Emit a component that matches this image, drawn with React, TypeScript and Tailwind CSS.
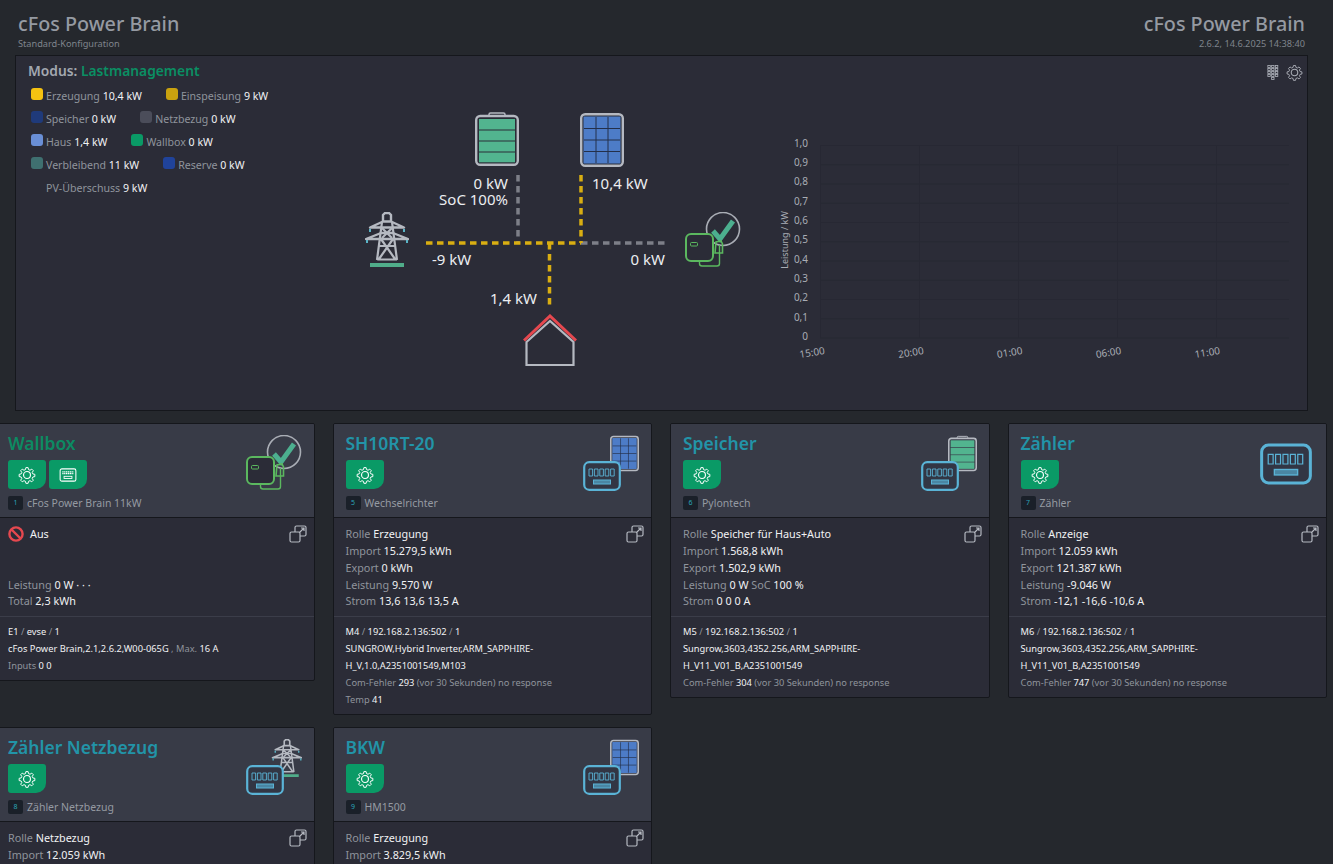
import React from 'react';

type SvgProps = React.SVGProps<SVGSVGElement>;

const BatteryIcon: React.FC<SvgProps> = (props) => (
  <svg viewBox="0 0 44 54" fill="none" {...props}>
    <path d="M14 4V2.5A1.5 1.5 0 0 1 15.5 1h13A1.5 1.5 0 0 1 30 2.5V4" stroke="#b5b9c1" strokeWidth="1.5" />
    <rect x="1.2" y="4" width="41.6" height="48.8" rx="4" stroke="#b5b9c1" strokeWidth="2.4" />
    <rect x="4" y="7" width="36" height="10.5" fill="#52b48f" />
    <rect x="4" y="18.5" width="36" height="10" fill="#52b48f" />
    <rect x="4" y="29.5" width="36" height="10" fill="#52b48f" />
    <rect x="4" y="40.5" width="36" height="9.8" fill="#52b48f" />
  </svg>
);

const SolarIcon: React.FC<SvgProps> = (props) => (
  <svg viewBox="0 0 44 54" fill="none" {...props}>
    <rect x="1.2" y="1.2" width="41.6" height="51.6" rx="4" stroke="#b5b9c1" strokeWidth="2.4" />
    <rect x="3.5" y="3.5" width="37" height="47" fill="#4d7cc7" />
    <path d="M16 4v46M28 4v46M4 15.5h36M4 27h36M4 38.5h36" stroke="#24304a" strokeWidth="1" />
  </svg>
);

const TowerIcon: React.FC<SvgProps> = (props) => (
  <svg viewBox="0 0 44 55" fill="none" {...props}>
    <path d="M18 9V3l2-2h4l2 2v6" stroke="#b5b9c1" strokeWidth="2.4" />
    <path d="M5 15.5l13-6h8l13 6zM1 27l15-6h12l15 6z" stroke="#b5b9c1" strokeWidth="2.4" strokeLinejoin="round" />
    <path d="M17 10l-5 38M27 10l5 38M14 34h16M12 47.5h20M17 16l10 10M27 16l-10 10M16 27l14 20M28 27L14 47" stroke="#b5b9c1" strokeWidth="2.2" />
    <path d="M5 17v3M39 17v3M2 28v3M42 28v3" stroke="#5ab4c6" strokeWidth="2" />
    <rect x="5" y="51" width="34" height="4" fill="#50ad8a" />
  </svg>
);

const HouseIcon: React.FC<SvgProps> = (props) => (
  <svg viewBox="0 0 54 52" fill="none" {...props}>
    <path d="M3.5 28L27 7l23.5 21v23h-47z" stroke="#b5b9c1" strokeWidth="2.2" />
    <path d="M1 26.5L27 2l26 24.5" stroke="#e5484f" strokeWidth="3" />
  </svg>
);

const WallboxIcon: React.FC<SvgProps> = (props) => (
  <svg viewBox="0 0 56 56" fill="none" {...props}>
    <circle cx="38" cy="17" r="16.5" stroke="#a9adb5" strokeWidth="1.6" />
    <path d="M28 19l7 8L48 9" stroke="#4caf8f" strokeWidth="5" />
    <rect x="1" y="22" width="27" height="27" rx="5" stroke="#5bb85f" strokeWidth="2" fill="#2b2c37" />
    <rect x="5.5" y="30.5" width="7" height="3.5" rx="1" stroke="#5bb85f" strokeWidth="1" />
    <path d="M14.5 49v2.5a2.5 2.5 0 0 0 2.5 2.5h15a2.5 2.5 0 0 0 2.5-2.5V33" stroke="#5bb85f" strokeWidth="1.4" />
    <path d="M30 41l1-11 5-1 1.5 3v9z" stroke="#5bb85f" strokeWidth="1.6" />
  </svg>
);

const MeterIcon: React.FC<SvgProps> = (props) => (
  <svg viewBox="0 0 38 30" fill="none" {...props}>
    <rect x="1.2" y="1.2" width="35.6" height="27.6" rx="5" stroke="#5ab3d6" strokeWidth="2.2" fill="#323644" />
    <path d="M6 8h3.6v7H6zM11.4 8H15v7h-3.6zM16.8 8h3.6v7h-3.6zM22.2 8h3.6v7h-3.6zM27.6 8h3.6v7h-3.6z" stroke="#5ab3d6" strokeWidth="0.9" />
    <rect x="10.5" y="19" width="17" height="4" stroke="#5ab3d6" strokeWidth="1" fill="#4a86a3" />
  </svg>
);

const GearIcon: React.FC<SvgProps> = (props) => (
  <svg viewBox="0 0 24 24" fill="none" stroke="currentColor" strokeWidth="1.5" strokeLinejoin="round" {...props}>
    <path d="M10.3 2h3.4l.6 3 2.3 1 2.6-1.7 2.4 2.4-1.7 2.6 1 2.3 3 .6v3.4l-3 .6-1 2.3 1.7 2.6-2.4 2.4-2.6-1.7-2.3 1-.6 3h-3.4l-.6-3-2.3-1-2.6 1.7-2.4-2.4 1.7-2.6-1-2.3-3-.6v-3.4l3-.6 1-2.3-1.7-2.6 2.4-2.4L7.4 6l2.3-1z" transform="translate(12 12) scale(.88) translate(-12 -13.2)" />
    <circle cx="12" cy="12" r="4.6" />
  </svg>
);

const KeypadIcon: React.FC<SvgProps> = (props) => (
  <svg viewBox="0 0 12 16" fill="none" stroke="#a9adb5" strokeWidth="0.9" {...props}>
    {[0.5, 4.5, 8.5].map((x) =>
      [0.5, 3.7, 6.9, 10.1].map((y) => <rect key={`${x}-${y}`} x={x} y={y} width="2.6" height="2.2" />),
    )}
    <rect x="4.5" y="13.3" width="2.6" height="2.2" />
  </svg>
);

const ExpandIcon: React.FC<SvgProps> = (props) => (
  <svg viewBox="0 0 18 18" fill="none" stroke="#b5b9c1" strokeWidth="1.2" {...props}>
    <path d="M6 7V2.5A1.5 1.5 0 0 1 7.5 1h8A1.5 1.5 0 0 1 17 2.5v7a1.5 1.5 0 0 1-1.5 1.5H11" />
    <rect x="1" y="7" width="10" height="10" rx="1.5" />
    <path d="M10.5 7.5L15 3M12 3h3v3" />
  </svg>
);

const BlockedIcon: React.FC<SvgProps> = (props) => (
  <svg viewBox="0 0 16 16" fill="none" stroke="#e5484f" strokeWidth="2.4" {...props}>
    <circle cx="8" cy="8" r="6.6" />
    <path d="M3.5 3.5l9 9" />
  </svg>
);

const StackIcon: React.FC<{ back: 'solar' | 'battery' | 'tower' }> = ({ back }) => (
  <svg viewBox="0 0 56 60" className="h-[60px] w-[56px]" fill="none">
    {back === 'solar' && <SolarIcon x="27" y="0" width="29" height="37" />}
    {back === 'battery' && <BatteryIcon x="27" y="0" width="29" height="37" />}
    {back === 'tower' && <TowerIcon x="25" y="0" width="32" height="38" />}
    <MeterIcon x="0" y="26" width="38" height="30" />
  </svg>
);

const L: React.FC<{ children: React.ReactNode }> = ({ children }) => (
  <span className="text-[#8f949c]">{children}</span>
);

const V: React.FC<{ children: React.ReactNode }> = ({ children }) => (
  <span className="text-[#f1f2f4]">{children}</span>
);

const legend = [
  [
    { color: 'bg-[#f5c211]', label: 'Erzeugung', value: '10,4 kW' },
    { color: 'bg-[#c9a20f]', label: 'Einspeisung', value: '9 kW' },
  ],
  [
    { color: 'bg-[#1f3a7a]', label: 'Speicher', value: '0 kW' },
    { color: 'bg-[#4b4d5a]', label: 'Netzbezug', value: '0 kW' },
  ],
  [
    { color: 'bg-[#6a8fd6]', label: 'Haus', value: '1,4 kW' },
    { color: 'bg-[#0a9a66]', label: 'Wallbox', value: '0 kW' },
  ],
  [
    { color: 'bg-[#3f7070]', label: 'Verbleibend', value: '11 kW' },
    { color: 'bg-[#20439a]', label: 'Reserve', value: '0 kW' },
  ],
];

const Legend = () => (
  <div className="w-[344px] shrink-0 pl-3">
    <div className="mt-[5px] text-[13.8px] leading-5 font-semibold text-[#a3a8b0]">
      Modus: <span className="text-[#0a8f63]">Lastmanagement</span>
    </div>
    <div className="mt-[4px] pl-[3px]">
      {legend.map((row) => (
        <div key={row[0].label} className="flex h-[23px] items-center gap-6 text-[10.6px]">
          {row.map((item) => (
            <div key={item.label} className="flex items-center gap-[3px]">
              <span className={`h-3 w-3 -translate-y-[2px] rounded-[3px] ${item.color}`} />
              <span>
                <L>{item.label}</L> <V>{item.value}</V>
              </span>
            </div>
          ))}
        </div>
      ))}
      <div className="flex h-[23px] items-center pl-[15px] text-[10.6px]">
        <span>
          <L>PV-Überschuss</L> <V>9 kW</V>
        </span>
      </div>
    </div>
  </div>
);

const Flow = () => (
  <div className="relative mt-11 h-[270px] w-[390px] shrink-0">
    <svg viewBox="360 100 390 270" className="h-full w-full" fill="none">
      <BatteryIcon x="475" y="112" width="44" height="54" />
      <SolarIcon x="580" y="113" width="44" height="54" />
      <TowerIcon x="365" y="212" width="44" height="55" />
      <WallboxIcon x="685" y="212" width="56" height="56" />
      <HouseIcon x="523" y="314" width="54" height="52" />
      <g strokeWidth="3.5" strokeDasharray="6.5 4.5">
        <path d="M581 243H668" stroke="#7d7f88" />
        <path d="M518 175V243" stroke="#7d7f88" />
        <path d="M426 243H581" stroke="#d9ae12" />
        <path d="M581 175V243" stroke="#d9ae12" />
        <path d="M549.5 243V305" stroke="#d9ae12" />
      </g>
    </svg>
    <div className="absolute top-[75px] right-[242px] text-right text-[15px] leading-4 text-[#eceef1]">
      <div>0 kW</div>
      <div>SoC 100%</div>
    </div>
    <div className="absolute top-[73px] left-[232px] text-[15px] leading-5 text-[#eceef1]">10,4 kW</div>
    <div className="absolute top-[149px] left-[72px] text-[15px] leading-5 text-[#eceef1]">-9 kW</div>
    <div className="absolute top-[149px] right-[85px] text-[15px] leading-5 text-[#eceef1]">0 kW</div>
    <div className="absolute top-[188px] right-[213px] text-[15px] leading-5 text-[#eceef1]">1,4 kW</div>
  </div>
);

const yTicks = ['1,0', '0,9', '0,8', '0,7', '0,6', '0,5', '0,4', '0,3', '0,2', '0,1', '0'];
const xTicks = ['15:00', '20:00', '01:00', '06:00', '11:00'];

const Chart = () => (
  <svg
    viewBox="770 130 530 235"
    className="mt-[74px] ml-5 h-[235px] w-[530px] shrink-0 [font-family:'Liberation_Sans',Arial,sans-serif]"
    fill="#a9adb5"
    fontSize="10"
  >
    {yTicks.map((tick, i) => (
      <g key={tick}>
        <path d={`M820 ${145.5 + i * 19.25}H1289`} stroke="#272833" />
        <text x="808" y={146.8 + i * 19.3} textAnchor="end">
          {tick}
        </text>
      </g>
    ))}
    {xTicks.map((tick, i) => (
      <g key={tick}>
        <path d={`M${820.5 + i * 99} 145V338`} stroke="#272833" />
        <text x={812 + i * 98.8} y={356} textAnchor="middle" transform={`rotate(-9 ${812 + i * 98.8} 352)`}>
          {tick}
        </text>
      </g>
    ))}
    <text transform="translate(788 240) rotate(-90)" textAnchor="middle" fontSize="9">
      Leistung / kW
    </text>
  </svg>
);

type CardData = {
  title: string;
  titleColor: string;
  id: string;
  name: string;
  extraButton?: boolean;
  icon: React.ReactNode;
  lines: React.ReactNode[];
  details: React.ReactNode[];
};

const cards: CardData[] = [
  {
    title: 'Wallbox',
    titleColor: 'text-[#0c8a62]',
    id: '1',
    name: 'cFos Power Brain 11kW',
    extraButton: true,
    icon: <WallboxIcon className="h-[56px] w-[56px]" />,
    lines: [
      <span className="flex items-center gap-[6px] text-[#f1f2f4]">
        <BlockedIcon className="h-4 w-4" /> Aus
      </span>,
      <span>&nbsp;</span>,
      <span>&nbsp;</span>,
      <>
        <L>Leistung</L> <V>0 W · · ·</V>
      </>,
      <>
        <L>Total</L> <V>2,3 kWh</V>
      </>,
    ],
    details: [
      <>
        E1 <L>/</L> evse <L>/</L> 1
      </>,
      <>
        cFos Power Brain,2.1,2.6.2,W00-065G <L>, Max.</L> <V>16 A</V>
      </>,
      <>
        <L>Inputs</L> <V>0 0</V>
      </>,
    ],
  },
  {
    title: 'SH10RT-20',
    titleColor: 'text-[#2294a8]',
    id: '5',
    name: 'Wechselrichter',
    icon: <StackIcon back="solar" />,
    lines: [
      <>
        <L>Rolle</L> <V>Erzeugung</V>
      </>,
      <>
        <L>Import</L> <V>15.279,5 kWh</V>
      </>,
      <>
        <L>Export</L> <V>0 kWh</V>
      </>,
      <>
        <L>Leistung</L> <V>9.570 W</V>
      </>,
      <>
        <L>Strom</L> <V>13,6 13,6 13,5 A</V>
      </>,
    ],
    details: [
      <>
        M4 <L>/</L> 192.168.2.136:502 <L>/</L> 1
      </>,
      <>SUNGROW,Hybrid Inverter,ARM_SAPPHIRE-</>,
      <>H_V,1.0,A2351001549,M103</>,
      <>
        <L>Com-Fehler</L> <V>293</V> <L>(vor 30 Sekunden) no response</L>
      </>,
      <>
        <L>Temp</L> <V>41</V>
      </>,
    ],
  },
  {
    title: 'Speicher',
    titleColor: 'text-[#2294a8]',
    id: '6',
    name: 'Pylontech',
    icon: <StackIcon back="battery" />,
    lines: [
      <>
        <L>Rolle</L> <V>Speicher für Haus+Auto</V>
      </>,
      <>
        <L>Import</L> <V>1.568,8 kWh</V>
      </>,
      <>
        <L>Export</L> <V>1.502,9 kWh</V>
      </>,
      <>
        <L>Leistung</L> <V>0 W</V> <L>SoC</L> <V>100 %</V>
      </>,
      <>
        <L>Strom</L> <V>0 0 0 A</V>
      </>,
    ],
    details: [
      <>
        M5 <L>/</L> 192.168.2.136:502 <L>/</L> 1
      </>,
      <>Sungrow,3603,4352.256,ARM_SAPPHIRE-</>,
      <>H_V11_V01_B,A2351001549</>,
      <>
        <L>Com-Fehler</L> <V>304</V> <L>(vor 30 Sekunden) no response</L>
      </>,
    ],
  },
  {
    title: 'Zähler',
    titleColor: 'text-[#2294a8]',
    id: '7',
    name: 'Zähler',
    icon: <MeterIcon className="mt-2 mr-[2px] h-[42px] w-[52px]" />,
    lines: [
      <>
        <L>Rolle</L> <V>Anzeige</V>
      </>,
      <>
        <L>Import</L> <V>12.059 kWh</V>
      </>,
      <>
        <L>Export</L> <V>121.387 kWh</V>
      </>,
      <>
        <L>Leistung</L> <V>-9.046 W</V>
      </>,
      <>
        <L>Strom</L> <V>-12,1 -16,6 -10,6 A</V>
      </>,
    ],
    details: [
      <>
        M6 <L>/</L> 192.168.2.136:502 <L>/</L> 1
      </>,
      <>Sungrow,3603,4352.256,ARM_SAPPHIRE-</>,
      <>H_V11_V01_B,A2351001549</>,
      <>
        <L>Com-Fehler</L> <V>747</V> <L>(vor 30 Sekunden) no response</L>
      </>,
    ],
  },
  {
    title: 'Zähler Netzbezug',
    titleColor: 'text-[#2294a8]',
    id: '8',
    name: 'Zähler Netzbezug',
    icon: <StackIcon back="tower" />,
    lines: [
      <>
        <L>Rolle</L> <V>Netzbezug</V>
      </>,
      <>
        <L>Import</L> <V>12.059 kWh</V>
      </>,
    ],
    details: [],
  },
  {
    title: 'BKW',
    titleColor: 'text-[#2294a8]',
    id: '9',
    name: 'HM1500',
    icon: <StackIcon back="solar" />,
    lines: [
      <>
        <L>Rolle</L> <V>Erzeugung</V>
      </>,
      <>
        <L>Import</L> <V>3.829,5 kWh</V>
      </>,
    ],
    details: [],
  },
];

const CardButton: React.FC<{ children: React.ReactNode }> = ({ children }) => (
  <div className="flex h-[29px] w-[38px] items-center justify-center rounded-[3px] rounded-br-[10px] bg-[#0a9a66] text-white">
    {children}
  </div>
);

const DeviceCard: React.FC<{ card: CardData }> = ({ card }) => (
  <div className="w-[319.5px] shrink-0 overflow-hidden rounded-[2px] border border-[#15171c] bg-[#2b2c37]">
    <div className="flex h-[94px] justify-between border-b border-[#15171c] bg-[#383b47] pt-[11px] pr-[12px] pl-[12px]">
      <div>
        <div className={`text-[17.5px] leading-[16px] font-semibold ${card.titleColor}`}>{card.title}</div>
        <div className="mt-[9px] flex gap-[3px]">
          <CardButton>
            <GearIcon className="h-[18px] w-[18px]" />
          </CardButton>
          {card.extraButton && (
            <CardButton>
              <svg viewBox="0 0 20 16" className="h-[14px] w-[18px]" fill="none" stroke="currentColor">
                <rect x="1" y="1" width="18" height="14" rx="2" strokeWidth="1.2" />
                <path d="M3.5 4.5h13M3.5 6.5h13" strokeWidth="1.4" strokeDasharray="1.5 .6" />
                <rect x="5.5" y="9.5" width="9" height="2.5" strokeWidth="1" />
              </svg>
            </CardButton>
          )}
        </div>
        <div className="mt-[6px] flex items-center gap-1 text-[10.5px] leading-4 text-[#959aa2]">
          <span className="flex h-[14px] w-[15px] items-center justify-center rounded-[2px] bg-[#1a2029] text-[7px] text-[#2aa5b8]">
            {card.id}
          </span>
          {card.name}
        </div>
      </div>
      {card.icon}
    </div>
    <div className="relative px-[12px] pt-[7px] pb-[7px] text-[10.8px] leading-[17px]">
      <ExpandIcon className="absolute top-[7px] right-[7px] h-[18px] w-[18px]" />
      {card.lines.map((line, i) => (
        <div key={i} className={i === 4 ? 'mt-[-1px] h-[17px]' : 'h-[17px]'}>
          {line}
        </div>
      ))}
    </div>
    {card.details.length > 0 && (
      <div className="border-t border-[#3b3d49] px-[12px] pt-[6px] pb-[6px] text-[9.3px] leading-[17px] text-[#f1f2f4]">
        {card.details.map((line, i) => (
          <div key={i} className="h-[17px]">
            {line}
          </div>
        ))}
      </div>
    )}
  </div>
);

export default function App() {
  return (
    <div className="h-[864px] w-[1333px] overflow-hidden bg-[#25282d] [font-family:'Noto_Sans','Open_Sans',sans-serif]">
      <header className="flex h-[55px] justify-between pt-[11px] pr-[28px] pl-[18px]">
        <div>
          <div className="text-[19.75px] leading-[26px] font-medium text-[#959aa2]">cFos Power Brain</div>
          <div className="mt-[1px] text-[9.2px] leading-3 text-[#7f848c]">Standard-Konfiguration</div>
        </div>
        <div className="text-right">
          <div className="text-[19.75px] leading-[26px] font-medium text-[#959aa2]">cFos Power Brain</div>
          <div className="mt-[1px] text-[9.2px] leading-3 text-[#7f848c]">2.6.2, 14.6.2025 14:38:40</div>
        </div>
      </header>

      <section className="relative mx-[15px] flex h-[356px] w-[1293px] border border-[#15171c] bg-[#2b2c37]">
        <Legend />
        <Flow />
        <Chart />
        <div className="absolute top-[8px] right-[4px] flex items-center gap-[7px] text-[#a9adb5]">
          <KeypadIcon className="h-[15px] w-[12px]" />
          <GearIcon className="h-[17px] w-[17px]" />
        </div>
      </section>

      <div className="mt-3 ml-[-5px] flex w-[1345px] flex-wrap items-start gap-x-[18px] gap-y-3">
        {cards.map((card) => (
          <DeviceCard key={card.id} card={card} />
        ))}
      </div>
    </div>
  );
}
